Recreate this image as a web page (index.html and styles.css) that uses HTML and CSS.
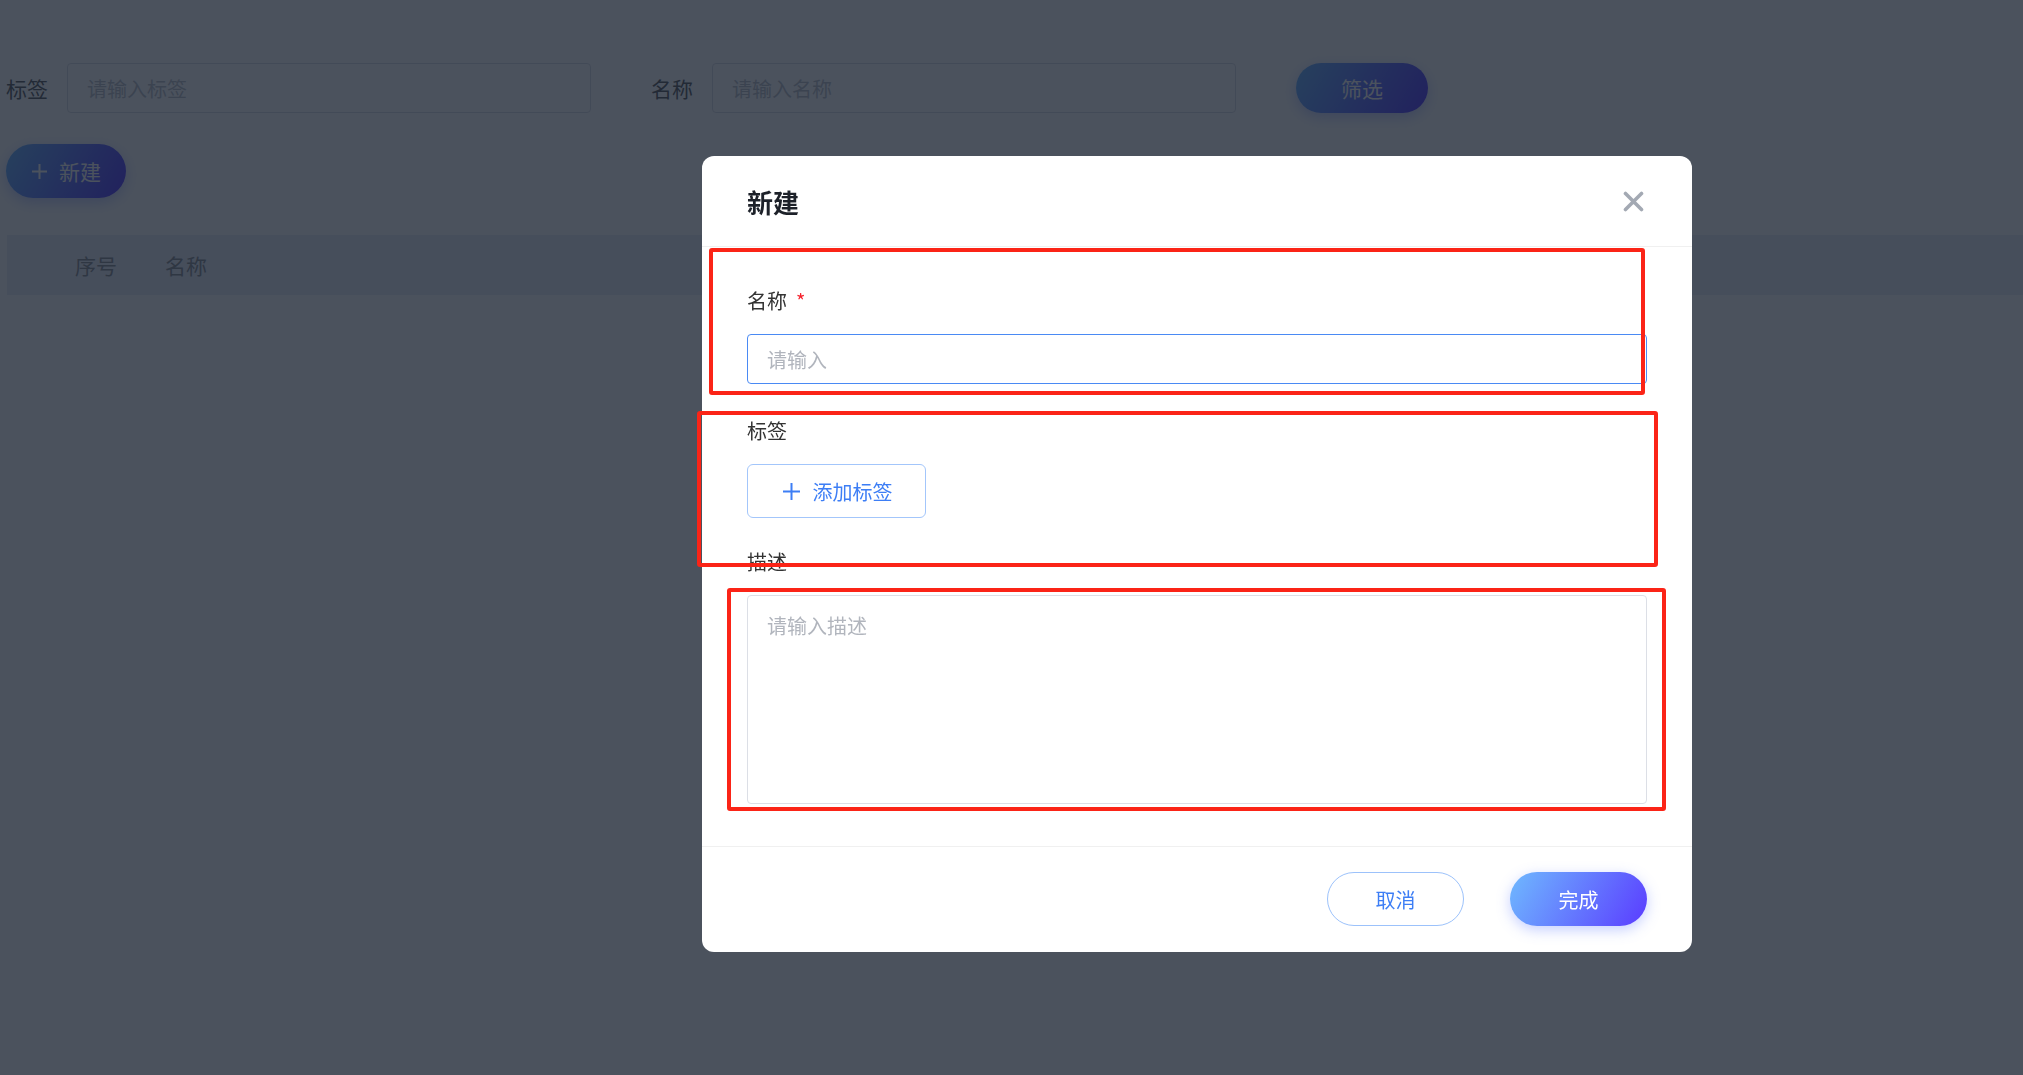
FILE: index.html
```html
<!DOCTYPE html>
<html lang="zh-CN">
<head>
    <meta charset="UTF-8">
    <meta name="viewport" content="width=device-width, initial-scale=1.0">
    <title>标签管理</title>
    <link rel="stylesheet" href="styles.css">
</head>
<body>
    <div class="page">
        <div class="filter-bar">
            <label class="filter-label">标签</label>
            <input class="filter-input" type="text" placeholder="请输入标签">
            <label class="filter-label filter-label-gap">名称</label>
            <input class="filter-input" type="text" placeholder="请输入名称">
            <button class="btn-gradient btn-filter">筛选</button>
        </div>

        <div class="toolbar">
            <button class="btn-gradient btn-new">
                <svg class="plus-icon" width="17" height="17" viewBox="0 0 17 17">
                    <path d="M8.5 1v15M1 8.5h15" stroke="currentColor" stroke-width="2" fill="none"/>
                </svg>
                <span>新建</span>
            </button>
        </div>

        <div class="table-head">
            <div class="table-col table-col-index">序号</div>
            <div class="table-col">名称</div>
        </div>
    </div>

    <div class="overlay">
        <div class="modal">
            <div class="modal-header">
                <h2 class="modal-title">新建</h2>
                <svg class="modal-close" width="21" height="21" viewBox="0 0 21 21">
                    <path d="M2.5 2.5L18.5 18.5M18.5 2.5L2.5 18.5" stroke="currentColor" stroke-width="3.6" stroke-linecap="round" fill="none"/>
                </svg>
            </div>

            <div class="modal-body">
                <div class="form-item form-item-name">
                    <div class="form-label">名称<span class="required">*</span></div>
                    <input class="form-input" type="text" placeholder="请输入">
                </div>

                <div class="form-item form-item-tags">
                    <div class="form-label">标签</div>
                    <button class="tag-add">
                        <svg width="21" height="21" viewBox="0 0 21 21">
                            <path d="M10.5 2v17M2 10.5h17" stroke="currentColor" stroke-width="2" fill="none"/>
                        </svg>
                        <span>添加标签</span>
                    </button>
                </div>

                <div class="form-item">
                    <div class="form-label">描述</div>
                    <textarea class="form-textarea" placeholder="请输入描述"></textarea>
                </div>
            </div>

            <div class="modal-footer">
                <button class="btn-outline">取消</button>
                <button class="btn-gradient btn-done">完成</button>
            </div>
        </div>

        <!-- red outlines around the form fields -->
        <div class="highlight highlight-name"></div>
        <div class="highlight highlight-tags"></div>
        <div class="highlight highlight-desc"></div>
    </div>
</body>
</html>
```

FILE: styles.css
```css
* {
    margin: 0;
    padding: 0;
    box-sizing: border-box;
}

body {
    font-family: "Noto Sans CJK SC", "Noto Sans", sans-serif;
    background: #fff;
    color: #606266;
    width: 2023px;
    height: 1075px;
    overflow: hidden;
}

button,
input,
textarea {
    font-family: inherit;
}

/* list page behind the dialog */
.page {
    padding: 63px 0 0 6px;
}

.filter-bar {
    display: flex;
    align-items: center;
    height: 50px;
}

.filter-label {
    font-size: 21px;
    color: #606266;
    margin-right: 19px;
}

.filter-label-gap {
    margin-left: 60px;
    margin-right: 19px;
}

.filter-input {
    width: 524px;
    height: 50px;
    border: 1px solid #dcdfe6;
    border-radius: 4px;
    padding: 0 19px;
    font-size: 20px;
    color: #606266;
    outline: none;
}

.filter-input::placeholder {
    color: #c0c4cc;
}

.btn-gradient {
    border: none;
    color: #fff;
    font-size: 20px;
    background: linear-gradient(120deg, #6fb9fe 0%, #5a3cff 100%);
    box-shadow: 0 4px 14px rgba(90, 118, 255, 0.35);
    cursor: pointer;
}

.btn-filter {
    width: 132px;
    height: 50px;
    border-radius: 25px;
    margin-left: 60px;
    font-size: 21px;
}

.toolbar {
    margin-top: 31px;
}

.btn-new {
    width: 120px;
    height: 54px;
    border-radius: 27px;
    font-size: 21px;
    display: inline-flex;
    align-items: center;
    justify-content: center;
    gap: 11px;
}

.table-head {
    display: flex;
    align-items: center;
    height: 60px;
    margin: 37px 0 0 1px;
    padding-left: 68px;
    background: #ebeef5;
    font-size: 21px;
    color: #909399;
}

.table-col-index {
    width: 90px;
}

/* dialog layer */
.overlay {
    position: fixed;
    inset: 0;
    background: rgba(15, 24, 39, 0.75);
}

.modal {
    width: 990px;
    margin: 156px 0 0 702px;
    background: #fff;
    border-radius: 12px;
}

.modal-header {
    height: 91px;
    padding: 0 45px;
    display: flex;
    align-items: center;
    justify-content: space-between;
    border-bottom: 1px solid #f0f0f0;
}

.modal-title {
    font-size: 26px;
    font-weight: 700;
    color: #1d2129;
}

.modal-close {
    color: #a3a9b3;
    margin-right: 3px;
}

.modal-body {
    padding: 40px 45px 42px;
}

.form-item-name {
    margin-bottom: 33px;
}

.form-item-tags {
    margin-bottom: 30px;
}

.form-label {
    font-size: 20px;
    line-height: 28px;
    color: #333;
    margin-bottom: 19px;
}

.required {
    color: #f5222d;
    margin-left: 9px;
}

.form-input {
    display: block;
    width: 100%;
    height: 50px;
    border: 1px solid #4a8af4;
    border-radius: 4px;
    padding: 0 19px;
    font-size: 20px;
    color: #333;
    outline: none;
}

.form-input::placeholder,
.form-textarea::placeholder {
    color: #b1b5bd;
}

.tag-add {
    width: 179px;
    height: 54px;
    border: 1px solid #a3c6fb;
    border-radius: 6px;
    background: #fff;
    color: #3d7ef5;
    font-size: 20px;
    display: flex;
    align-items: center;
    justify-content: center;
    gap: 11px;
    cursor: pointer;
}

.form-textarea {
    display: block;
    width: 100%;
    height: 209px;
    border: 1px solid #dcdfe6;
    border-radius: 4px;
    padding: 15px 19px;
    font-size: 20px;
    line-height: 30px;
    color: #333;
    resize: none;
    outline: none;
}

.modal-footer {
    display: flex;
    justify-content: flex-end;
    gap: 46px;
    padding: 25px 45px 26px;
    border-top: 1px solid #f0f0f0;
}

.btn-outline {
    width: 137px;
    height: 54px;
    border: 1px solid #9cc2fb;
    border-radius: 27px;
    background: #fff;
    color: #3d7ef5;
    font-size: 20px;
    cursor: pointer;
}

.btn-done {
    width: 137px;
    height: 54px;
    border-radius: 27px;
}

/* outlines drawn on top of the dialog */
.highlight {
    position: absolute;
    border: 4px solid #fb2417;
    border-radius: 3px;
}

.highlight-name {
    left: 709px;
    top: 248px;
    width: 936px;
    height: 147px;
}

.highlight-tags {
    left: 697px;
    top: 411px;
    width: 961px;
    height: 156px;
}

.highlight-desc {
    left: 727px;
    top: 588px;
    width: 939px;
    height: 223px;
}
```
